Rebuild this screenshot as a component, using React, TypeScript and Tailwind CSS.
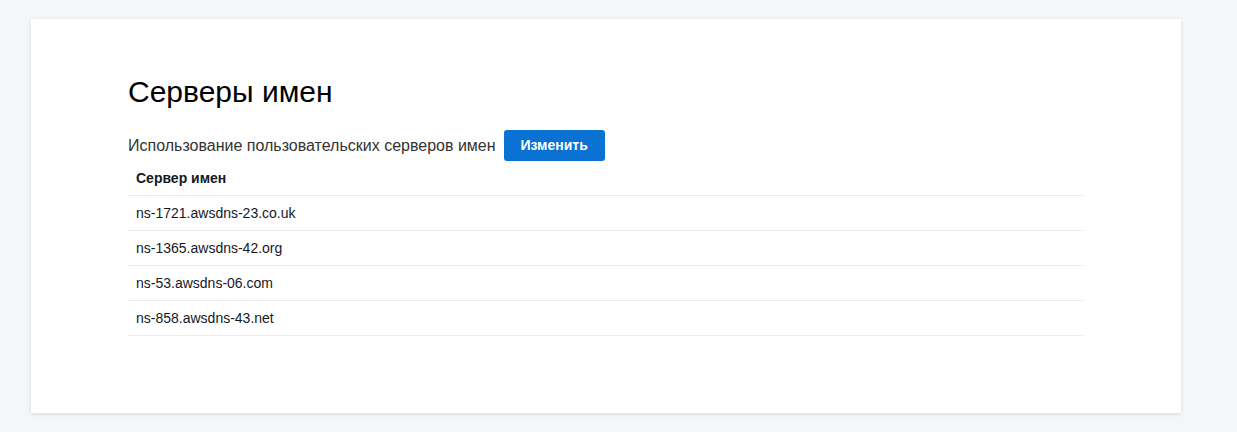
export default function App() {
  const servers = [
    "ns-1721.awsdns-23.co.uk",
    "ns-1365.awsdns-42.org",
    "ns-53.awsdns-06.com",
    "ns-858.awsdns-43.net",
  ];
  return (
    <div
      className="min-h-[432px] w-full bg-[#f5f6f8] pt-[19px] pl-[31px]"
      style={{ fontFamily: '"Liberation Sans", Arial, sans-serif' }}
    >
      <div className="w-[1150px] h-[394px] bg-white shadow-[0_1px_4px_rgba(0,0,0,0.12)] px-[97px] pt-[55px]">
        <h1 className="text-[30px] leading-[36px] text-[#000] font-normal">Серверы имен</h1>
        <div className="mt-[20px] flex items-center h-[31px]">
          <span className="text-[16px] text-[#333]">Использование пользовательских серверов имен</span>
          <button className="ml-[8px] h-[31px] w-[101px] rounded-[3px] bg-[#0972d3] text-white text-[14px] font-bold">
            Изменить
          </button>
        </div>
        <div className="w-[955px]">
          <div className="h-[35px] flex items-center px-[8px] border-b border-[#e9ebed] text-[14px] font-bold text-[#16191f]">
            Сервер имен
          </div>
          {servers.map((s) => (
            <div
              key={s}
              className="h-[35px] flex items-center px-[8px] border-b border-[#e9ebed] text-[14px] text-[#16191f]"
            >
              {s}
            </div>
          ))}
        </div>
      </div>
    </div>
  );
}
